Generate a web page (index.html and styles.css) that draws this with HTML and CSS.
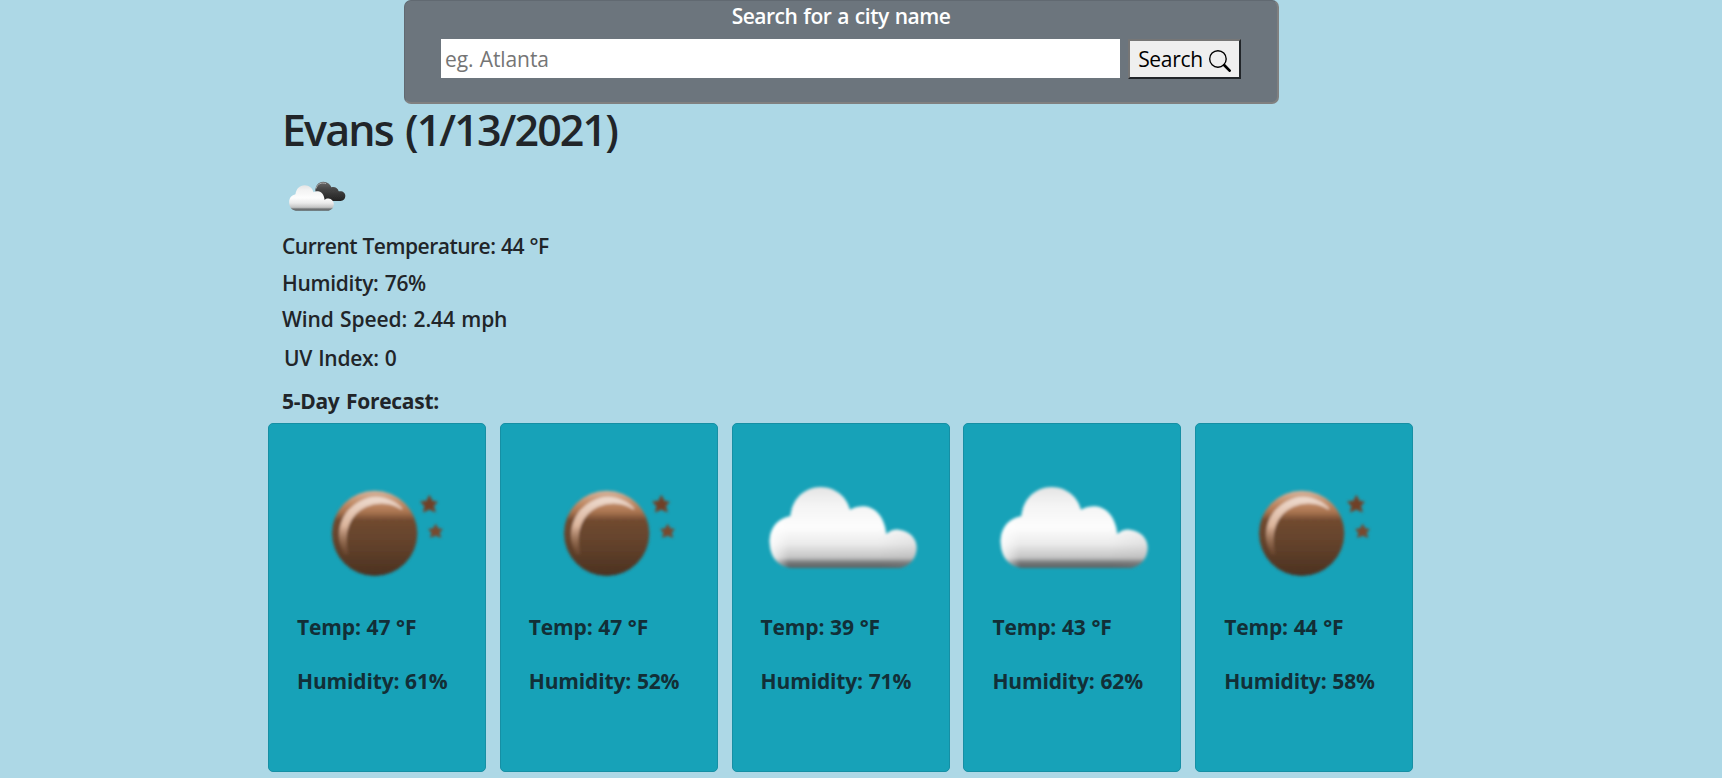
FILE: index.html
```html
<!DOCTYPE html>
<html lang="en">
<head>
<meta charset="utf-8">
<title>Weather Dashboard</title>
<link rel="stylesheet" href="styles.css">
</head>
<body>
<svg class="defs" aria-hidden="true">
  <defs>
    <linearGradient id="cloudFill" x1="0" y1="0" x2="0" y2="1">
      <stop offset="0" stop-color="#e4e4e4"/><stop offset=".2" stop-color="#f3f3f3"/><stop offset=".5" stop-color="#fdfdfd"/>
      <stop offset=".7" stop-color="#ebebeb"/><stop offset=".87" stop-color="#c4c4c4"/><stop offset=".93" stop-color="#777a7b"/><stop offset="1" stop-color="#5b5f61"/>
    </linearGradient>
    <linearGradient id="cloudSide" x1="0" y1="0" x2="1" y2="0">
      <stop offset="0" stop-color="#fff" stop-opacity=".8"/><stop offset=".13" stop-color="#fff" stop-opacity="0"/>
      <stop offset=".75" stop-color="#999" stop-opacity="0"/><stop offset="1" stop-color="#aaa" stop-opacity=".15"/>
    </linearGradient>
    <linearGradient id="moonFill" x1="0" y1="0" x2="0" y2="1">
      <stop offset="0" stop-color="#d8b49c"/><stop offset=".17" stop-color="#bd8660"/><stop offset=".25" stop-color="#a97450"/><stop offset=".35" stop-color="#70492f"/>
      <stop offset=".6" stop-color="#64432c"/><stop offset="1" stop-color="#4b3120"/>
    </linearGradient>
    <linearGradient id="rim" x1="0" y1="0" x2="0" y2="1">
      <stop offset="0" stop-color="#eddace"/><stop offset=".5" stop-color="#dcb59c"/><stop offset="1" stop-color="#8a5b3d" stop-opacity=".2"/>
    </linearGradient>
    <linearGradient id="darkFill" x1="0" y1="0" x2="0" y2="1">
      <stop offset="0" stop-color="#6a6a6a"/><stop offset=".4" stop-color="#454545"/><stop offset="1" stop-color="#222"/>
    </linearGradient>
    <filter id="soft"><feGaussianBlur stdDeviation="4"/></filter>
    <filter id="fine"><feGaussianBlur stdDeviation="1.800"/></filter>
    <path id="cloudShape" d="M212 476C170 471 147 440 148 392C150 353 173 328 210 320C216 268 251 234 301 233C346 234 379 262 389 301C406 292 420 290 433 291C468 295 493 325 498 374C509 364 521 360 535 361C568 364 590 388 589 416C588 447 570 470 538 476Z"/>
    <symbol id="cloud" viewBox="35 200 654 330">
      <g filter="url(#soft)"><use href="#cloudShape" fill="url(#cloudFill)"/><use href="#cloudShape" fill="url(#cloudSide)"/></g>
    </symbol>
    <symbol id="moon" viewBox="24 200 654 330">
      <g filter="url(#soft)">
        <circle cx="344" cy="372" r="128" fill="url(#moonFill)"/>
        <path d="M255 434C224 375 241 301 315 271C351 256 396 269 424 298C396 276 350 276 318 290C266 314 246 368 263 434Z" fill="url(#rim)" stroke="url(#rim)" stroke-width="5" stroke-linejoin="round"/>
      </g>
      <g filter="url(#soft)" stroke="#704c37" stroke-width="3">
        <path d="M508 258L517 275L532 278L521 290L526 308L508 300L490 308L494 291L482 277L500 275Z" fill="#704028"/>
        <path d="M527 345L534 358L547 360L538 370L542 384L527 378L512 384L515 370L506 360L520 358Z" fill="#78482e"/>
      </g>
    </symbol>
  </defs>
</svg>

<form class="search">
  <label class="search-title" for="city">Search for a city name</label>
  <div class="search-row">
    <input class="search-input" id="city" type="text" placeholder="eg. Atlanta">
    <button class="search-button" type="button"><span>Search</span>
      <svg class="lens" viewBox="0 0 16 16" fill="currentColor"><path fill-rule="evenodd" d="M10.442 10.442a1 1 0 0 1 1.415 0l3.85 3.85a1 1 0 0 1-1.414 1.415l-3.85-3.85a1 1 0 0 1 0-1.415z"/><path fill-rule="evenodd" d="M6.5 12a5.500 5.500 0 1 0 0-11 5.500 5.500 0 0 0 0 11zM13 6.500a6.500 6.500 0 1 1-13 0 6.500 6.500 0 0 1 13 0z"/></svg>
    </button>
  </div>
</form>

<main class="weather">
  <section class="current">
    <h1 class="city">Evans (1/13/2021)</h1>
    <svg class="current-icon" viewBox="0 0 228 228">
      <g filter="url(#fine)" transform="translate(-36 24)">
        <path d="M136 94C136 76 145 66 160 65C173 66 181 72 184 82C194 79 204 84 206 94C219 92 226 99 226 108C226 117 220 122 212 123H160Z" fill="url(#darkFill)"/>
        <path d="M138 86C142 72 154 66 168 71" fill="none" stroke="#aaa" stroke-width="3"/>
        <use href="#cloudShape" transform="translate(12.500 2) scale(.304 .315)" fill="url(#cloudFill)"/>
      </g>
    </svg>
    <p class="line temperature">Current Temperature: 44 °F</p>
    <p class="line humidity">Humidity: 76%</p>
    <p class="line wind">Wind Speed: 2.44 mph</p>
    <p class="line uv">UV Index: 0</p>
    <h2 class="forecast-title">5-Day Forecast:</h2>
  </section>
  <section class="forecast">
    <article class="card"><svg class="card-icon"><use href="#moon"/></svg><p class="card-temp">Temp: 47 °F</p><p class="card-humidity">Humidity: 61%</p></article>
    <article class="card"><svg class="card-icon"><use href="#moon"/></svg><p class="card-temp">Temp: 47 °F</p><p class="card-humidity">Humidity: 52%</p></article>
    <article class="card"><svg class="card-icon"><use href="#cloud"/></svg><p class="card-temp">Temp: 39 °F</p><p class="card-humidity">Humidity: 71%</p></article>
    <article class="card"><svg class="card-icon"><use href="#cloud"/></svg><p class="card-temp">Temp: 43 °F</p><p class="card-humidity">Humidity: 62%</p></article>
    <article class="card"><svg class="card-icon"><use href="#moon"/></svg><p class="card-temp">Temp: 44 °F</p><p class="card-humidity">Humidity: 58%</p></article>
  </section>
</main>
</body>
</html>
```
FILE: styles.css
```css
* { box-sizing: border-box; }
body {
  margin: 0;
  height: 778px;
  overflow: hidden;
  background: #add8e6;
  color: #212529;
  font-family: "Open Sans", "Noto Sans", sans-serif;
  font-size: 21px;
  line-height: 36px;
}
h1, h2, p { margin: 0; }
.defs { position: absolute; width: 0; height: 0; }

.search {
  width: 875px;
  height: 104px;
  margin-left: 404px;
  padding: 0 36px 0 36px;
  background: #6c757d;
  border-radius: 7px;
  border-style: solid;
  border-width: 1px 2px 2px 1px;
  border-color: #616971 #808080 #808080 #616971;
}
.search-title {
  display: block;
  height: 38px;
  line-height: 31px;
  color: #fff;
  font-weight: 650;
  text-align: center;
  letter-spacing: -0.5px;
  word-spacing: 1px;
}
.search-row { display: flex; gap: 8px; }
.search-input {
  width: 680px;
  height: 39px;
  border: 0;
  padding: 1px 5px 0 4px;
  background: #fff;
  font: inherit;
  letter-spacing: -0.1px;
  word-spacing: 1px;
}
.search-input::placeholder { color: #757575; opacity: 1; }
.search-button {
  display: flex;
  align-items: center;
  gap: 6px;
  width: 113px;
  height: 40px;
  padding: 0 0 0 8px;
  border-style: solid;
  border-width: 2px;
  border-color: #767676 #212529 #212529 #767676;
  background: #efefef;
  color: #000;
  font: inherit;
  letter-spacing: -0.3px;
}
.lens { width: 22px; height: 22px; margin-top: 4px; }

.current { padding-left: 282px; }
.city {
  height: 48px;
  padding-top: 2px;
  line-height: 48px;
  font-size: 43px;
  font-weight: 600;
  letter-spacing: -1.900px;
  word-spacing: 3px;
  white-space: nowrap;
}
.current-icon { display: block; width: 76px; height: 76px; }
.line { height: 36.5px; font-weight: 600; }
.temperature { letter-spacing: -0.5px; word-spacing: .5px; }
.humidity { letter-spacing: -0.3px; word-spacing: 1px; }
.wind { letter-spacing: -0.1px; word-spacing: 1px; }
.uv { height: 43px; padding: 2px 0 0 2px; letter-spacing: -0.3px; word-spacing: 1px; }
.forecast-title {
  height: 43px;
  padding-top: 2px;
  font-size: 21px;
  font-weight: 700;
  letter-spacing: -0.3px;
  word-spacing: 1.500px;
  line-height: 36px;
}
.forecast { display: flex; gap: 13.800px; padding-left: 268px; margin-top: -1px; }
.card {
  width: 218px;
  height: 349px;
  padding-top: 52px;
  flex: none;
  background: #17a2b8;
  border: 1px solid #168fa4;
  border-radius: 5px;
  font-weight: 700;
  letter-spacing: -0.15px;
  word-spacing: .5px;
}
.card-icon { display: block; width: 218px; height: 110px; margin-left: -1px; }
.card p { padding-left: 28px; height: 36px; color: #122f37; white-space: nowrap; }
.card-temp { margin-top: 23px; }
.card .card-humidity { margin-top: 18.500px; }
```
